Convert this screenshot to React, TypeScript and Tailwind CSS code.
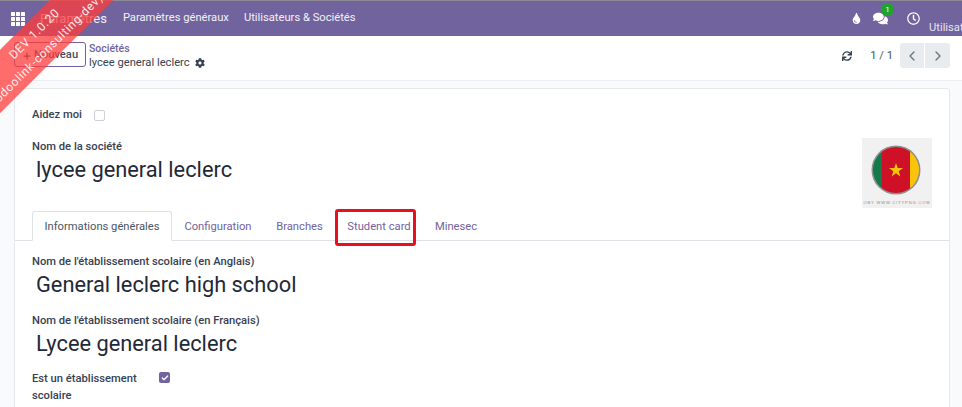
import { ChevronLeft, ChevronRight, Check, Plus } from "lucide-react";
import { FaCog, FaComments, FaRegClock, FaSync, FaTint } from "react-icons/fa";

function Flag() {
  return (
    <div className="w-[70px] h-[70px] bg-[#f1f1f1] flex flex-col items-center">
      <svg width="70" height="70" viewBox="0 0 70 70">
        <defs>
          <clipPath id="disc"><circle cx="34" cy="32" r="23" /></clipPath>
        </defs>
        <circle cx="34" cy="32" r="24.5" fill="#8f8f8f" />
        <g clipPath="url(#disc)">
          <rect x="10" y="8" width="10" height="48" fill="#147a4b" />
          <rect x="20" y="8" width="28" height="48" fill="#ce1126" />
          <rect x="48" y="8" width="10" height="48" fill="#fcc30b" />
        </g>
        <polygon points="34,25 35.7,30 41,30 36.7,33.2 38.3,38.4 34,35.2 29.7,38.4 31.3,33.2 27,30 32.3,30" fill="#fcc30b" />
        <text x="35" y="65.5" textAnchor="middle" fontSize="4" letterSpacing="0.9" fill="#8a8a8a" fontFamily="Liberation Sans">OBY WWW.CITYPNG.COM</text>
      </svg>
    </div>
  );
}

function Field({ label, value }: { label: string; value: string }) {
  return (
    <div className="flex flex-col">
      <div className="text-[11.2px] leading-[16px] font-medium text-[#374151]">{label}</div>
      <div className="text-[21.8px] leading-[30px] text-[#1f2937] pl-[4px]">{value}</div>
    </div>
  );
}

export default function App() {
  return (
    <div className="relative w-[962px] h-[407px] overflow-hidden bg-[#f9fafb] font-['Roboto',sans-serif]">
      <div className="h-[36px] bg-[#71639e] flex items-center text-white border-t border-[#8d8a96]">
        <div className="w-[36px] flex justify-center">
          <svg width="14" height="14" viewBox="0 0 14 14" fill="#fff">
            {[0, 5, 10].flatMap((x) => [0, 5, 10].map((y) => <rect key={`${x}-${y}`} x={x} y={y} width="4" height="4" rx="0.5" />))}
          </svg>
        </div>
        <span className="text-[13px] ml-[4px] text-[#f3f0f8]">Paramètres</span>
        <span className="text-[11.2px] ml-[16px] text-[#f3f0f8]">Paramètres généraux</span>
        <span className="text-[11.2px] ml-[15px] text-[#f3f0f8]">Utilisateurs &amp; Sociétés</span>
        <div className="ml-auto flex items-center h-full">
          <FaTint size={11} />
          <div className="relative ml-[11px]">
            <FaComments size={15} />
            <span className="absolute -top-[8px] left-[8px] w-[13px] h-[13px] rounded-full bg-[#1fa52f] text-[8px] leading-[13px] text-center">1</span>
          </div>
          <FaRegClock size={13} className="ml-[19px]" />
          <span className="text-[11.2px] ml-[9px] mt-[19px] w-[33px] overflow-hidden whitespace-nowrap text-[#e6e1f0]">Utilisateur</span>
        </div>
      </div>

      <div className="h-[45px] bg-white flex items-center pl-[14px] pr-[12px] border-b border-[#eceef1]">
        <button className="w-[72px] h-[25px] pt-[2px] border border-[#71639e] rounded-[3px] text-[11.2px] font-medium text-[#4b4a5c] flex items-center justify-center gap-[2px] -mt-[7px]">
          <Plus size={10} strokeWidth={3} />Nouveau
        </button>
        <div className="ml-[3px] -mt-[4px]">
          <div className="text-[10.5px] leading-[13px] font-medium text-[#71639e]">Sociétés</div>
          <div className="text-[11.2px] leading-[15px] text-[#374151] flex items-center gap-[5px]">
            lycee general leclerc <FaCog size={10} />
          </div>
        </div>
        <div className="ml-auto flex items-center -mt-[5px]">
          <FaSync size={10} className="text-[#374151]" />
          <span className="text-[11.2px] text-[#4b5563] ml-[18px] mt-[2px]">1 / 1</span>
          <div className="flex ml-[7px]">
            <div className="w-[25px] h-[25px] bg-[#e9ecef] rounded-l-[3px] flex items-center justify-center border-r border-white"><ChevronLeft size={16} className="text-[#6b7280]" /></div>
            <div className="w-[25px] h-[25px] bg-[#e9ecef] rounded-r-[3px] flex items-center justify-center"><ChevronRight size={16} className="text-[#6b7280]" /></div>
          </div>
        </div>
      </div>

      <div className="ml-[14px] mr-[12px] mt-[7px] bg-white border border-[#e5e7eb] rounded-t-[3px] h-[330px]">
        <div className="pl-[17px] pt-[17px] flex items-center h-[36px]">
          <span className="text-[11.2px] font-medium text-[#374151]">Aidez moi</span>
          <span className="ml-[12px] w-[11px] h-[11px] border border-[#ccd0d5] rounded-[2px] bg-white" />
        </div>
        <div className="flex justify-between pl-[17px] pr-[17px]">
          <div className="pt-[14px]">
            <div className="text-[11.2px] leading-[16px] font-medium text-[#374151]">Nom de la société</div>
            <div className="text-[21.8px] leading-[30px] text-[#1f2937] pl-[4px]">lycee general leclerc</div>
          </div>
          <div className="pt-[13px]"><Flag /></div>
        </div>

        <div className="flex items-end h-[29px] border-b border-[#dee2e6] pl-[17px] text-[11.2px] text-[#71639e] mt-[4px]">
          <div className="h-[30px] w-[140px] pt-[2px] -mb-[1px] border border-[#dee2e6] border-b-white bg-white rounded-t-[3px] flex items-center justify-center text-[#4b5563]">Informations générales</div>
          <div className="w-[92px] h-[29px] pt-[3px] flex items-center justify-center">Configuration</div>
          <div className="w-[71px] h-[29px] pt-[3px] flex items-center justify-center">Branches</div>
          <div className="w-[88px] h-[29px] pt-[3px] flex items-center justify-center">Student card</div>
          <div className="w-[66px] h-[29px] pt-[3px] flex items-center justify-center">Minesec</div>
        </div>

        <div className="pl-[17px] pt-[13px] flex flex-col gap-[13px]">
          <Field label="Nom de l'établissement scolaire (en Anglais)" value="General leclerc high school" />
          <Field label="Nom de l'établissement scolaire (en Français)" value="Lycee general leclerc" />
          <div className="flex -mt-[2px]">
            <div className="w-[128px] text-[11.2px] leading-[17px] font-medium text-[#374151]">Est un établissement scolaire</div>
            <span className="mt-[2px] ml-[-1px] w-[11px] h-[11px] rounded-[2px] bg-[#71639e] flex items-center justify-center"><Check size={8} strokeWidth={4} className="text-white" /></span>
          </div>
        </div>
      </div>

      {/* highlight annotation */}
      <div className="absolute left-[335px] top-[209px] w-[81px] h-[37px] border-[3px] border-[#e8101c] rounded-[3px]" />

      {/* dev ribbon */}
      <div className="absolute left-[-59px] top-[18px] w-[200px] h-[45px] -rotate-45 bg-[#ff3b3b]/75 text-[#ffe9e9] text-[12px] leading-[20px] text-center flex flex-col justify-center tracking-[0.7px]">
        <div>DEV 1.0.20</div>
        <div className="whitespace-nowrap">odoolink-consulting-dev)</div>
      </div>
    </div>
  );
}
